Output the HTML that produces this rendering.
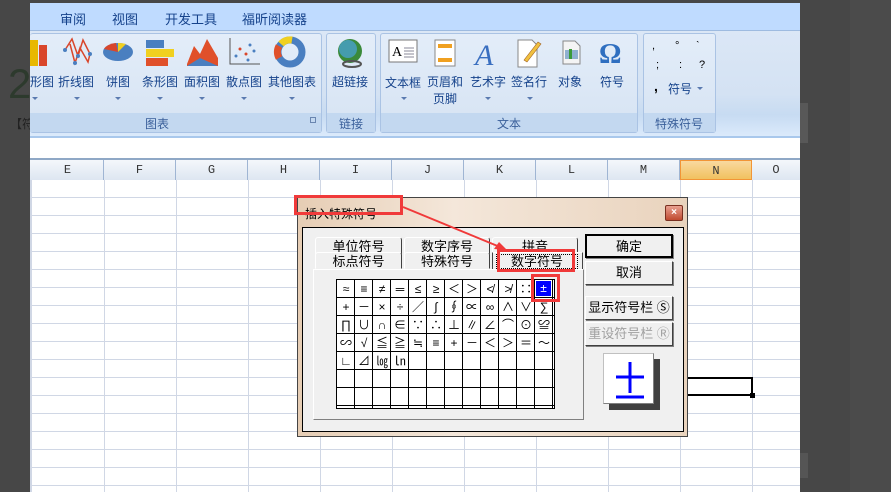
<!DOCTYPE html>
<html><head><meta charset="utf-8"><style>
*{margin:0;padding:0;box-sizing:border-box}
body{width:891px;height:492px;overflow:hidden;background:#474747;position:relative;font-family:"Liberation Sans","Noto Sans CJK SC",sans-serif}
.a{position:absolute}
.t{position:absolute;font-size:13px;color:#15428b;white-space:nowrap}
.lbl{position:absolute;font-size:12px;color:#15428b;white-space:nowrap}
.dd{position:absolute;width:0;height:0;border-left:3px solid transparent;border-right:3px solid transparent;border-top:3px solid #5a7ab0}
.col{position:absolute;top:160px;height:20px;font-family:"Liberation Mono",monospace;font-size:12px;color:#333;text-align:center;line-height:20px;border-right:1px solid #9fb5d3;background:linear-gradient(#f4f7fb,#dde6f1)}
.btn{position:absolute;left:585px;width:88px;height:24px;background:#f0f0f0;border:1px solid;border-color:#fff #404040 #404040 #fff;box-shadow:1px 1px 0 #808080;font-size:13px;text-align:center;line-height:22px;color:#000}
.cell{position:absolute;width:18px;height:18px;font-size:12px;line-height:18px;text-align:center;color:#000}
.tab{position:absolute;height:17px;font-size:13px;line-height:17px;text-align:center;background:#f0f0f0;border:1px solid;border-color:#fff #404040 transparent #fff;border-radius:3px 3px 0 0}
.p{position:absolute;font-size:11px;color:#000}
</style></head><body>
<div class="a" style="left:8px;top:60px;font-size:42px;color:#2d3a2d">2</div>
<div class="a" style="left:10px;top:115px;font-size:12px;color:#222">【符</div>
<div class="a" style="left:850px;top:0;width:41px;height:492px;background:#4b4b4b"></div>
<div class="a" style="left:800px;top:103px;width:8px;height:40px;background:#585858"></div>
<div class="a" style="left:800px;top:453px;width:8px;height:25px;background:#555"></div>

<div class="a" style="left:30px;top:3px;width:770px;height:489px;background:#fff;overflow:hidden">
 <div class="a" style="left:0;top:0;width:770px;height:27px;background:#bfdbff"></div>
 <div class="a" style="left:0;top:27px;width:770px;height:108px;background:linear-gradient(#dbe7f6,#d4e2f3 60%,#c7dbf2 80%,#dbeafb);border-top:1px solid #9ebbe0;border-bottom:2px solid #a9c8ec"></div>
 <div class="a" style="left:0;top:155px;width:770px;height:2px;background:#8fa8c6"></div>
</div>
<div class="t" style="left:60px;top:9px">审阅</div>
<div class="t" style="left:112px;top:9px">视图</div>
<div class="t" style="left:165px;top:9px">开发工具</div>
<div class="t" style="left:242px;top:9px">福昕阅读器</div>

<div class="a" style="left:30px;top:33px;width:292px;height:100px;border:1px solid #aac3e4;border-left:none;border-radius:3px;background:linear-gradient(#e3edf9,#d6e3f3)"></div>
<div class="a" style="left:30px;top:113px;width:291px;height:19px;background:#c3d8f0"></div>
<div class="a" style="left:326px;top:33px;width:50px;height:100px;border:1px solid #aac3e4;border-radius:3px;background:linear-gradient(#e3edf9,#d6e3f3)"></div>
<div class="a" style="left:327px;top:113px;width:48px;height:19px;background:#c3d8f0"></div>
<div class="a" style="left:380px;top:33px;width:258px;height:100px;border:1px solid #aac3e4;border-radius:3px;background:linear-gradient(#e3edf9,#d6e3f3)"></div>
<div class="a" style="left:381px;top:113px;width:256px;height:19px;background:#c3d8f0"></div>
<div class="a" style="left:643px;top:33px;width:73px;height:100px;border:1px solid #aac3e4;border-radius:3px;background:linear-gradient(#e3edf9,#d6e3f3)"></div>
<div class="a" style="left:644px;top:113px;width:71px;height:19px;background:#c3d8f0"></div>
<div class="lbl" style="left:145px;top:115px;color:#3a5f9a">图表</div>
<div class="a" style="left:310px;top:117px;width:6px;height:6px;border:1px solid #6a86b0"></div>
<div class="lbl" style="left:339px;top:115px;color:#3a5f9a">链接</div>
<div class="lbl" style="left:497px;top:115px;color:#3a5f9a">文本</div>
<div class="lbl" style="left:655px;top:115px;color:#3a5f9a">特殊符号</div>

<svg class="a" style="left:30px;top:36px" width="610" height="36">
 <rect x="0" y="4" width="8" height="26" fill="#e8b800"/><rect x="9" y="9" width="8" height="21" fill="#d9462b"/>
 <polyline points="35,14 42,3 48,20 53,4 60,18 58,26 50,12 45,27 40,8" fill="none" stroke="#d9462b" stroke-width="1.5"/>
 <circle cx="35" cy="14" r="2" fill="#4a7fc0"/><circle cx="48" cy="20" r="2" fill="#4a7fc0"/><circle cx="60" cy="18" r="2" fill="#4a7fc0"/><circle cx="45" cy="27" r="2" fill="#4a7fc0"/>
 <ellipse cx="88" cy="16" rx="15" ry="9" fill="#4a7fc0"/><path d="M88 16 L74 13 A15 9 0 0 1 86 7 Z" fill="#d9462b"/><path d="M88 16 L88 7 A15 9 0 0 1 96 8Z" fill="#f0d020"/>
 <rect x="116" y="4" width="18" height="8" fill="#4a7fc0"/><rect x="116" y="13" width="28" height="8" fill="#f0d020"/><rect x="116" y="22" width="22" height="8" fill="#e0502a"/>
 <path d="M157 28 L164 10 L170 18 L177 3 L188 22 L188 30 L157 30Z" fill="#e0502a"/><path d="M157 30 L170 22 L188 30Z" fill="#4a7fc0"/>
 <path d="M200 2 V28 H230" fill="none" stroke="#555" stroke-width="1"/>
 <circle cx="206" cy="20" r="1.5" fill="#4a7fc0"/><circle cx="210" cy="13" r="1.5" fill="#d9462b"/><circle cx="216" cy="18" r="1.5" fill="#d9462b"/><circle cx="220" cy="9" r="1.5" fill="#4a7fc0"/><circle cx="224" cy="15" r="1.5" fill="#4a7fc0"/><circle cx="218" cy="24" r="1.5" fill="#4a7fc0"/>
 <circle cx="260" cy="16" r="12" fill="none" stroke="#4a7fc0" stroke-width="7"/><path d="M251 8 A12 12 0 0 1 262 4" stroke="#f0d020" stroke-width="7" fill="none"/><path d="M249 22 A12 12 0 0 1 249 10" stroke="#e0502a" stroke-width="7" fill="none"/>
 <circle cx="320" cy="15" r="12" fill="#3a8a3a"/><circle cx="318" cy="13" r="9" fill="#4aa4e0" opacity=".7"/><ellipse cx="322" cy="28" rx="9" ry="3" fill="none" stroke="#555" stroke-width="2"/>
 <rect x="359" y="4" width="28" height="22" fill="#fff" stroke="#777"/><text x="362" y="20" font-size="14" font-family="Liberation Serif">A</text><path d="M374 12h10M374 15h10M374 18h10M374 21h10" stroke="#889" stroke-width="1"/>
 <rect x="405" y="4" width="20" height="26" fill="#fff" stroke="#888"/><rect x="408" y="8" width="14" height="4" fill="#f0a020"/><rect x="408" y="22" width="14" height="4" fill="#f0a020"/>
 <text x="445" y="29" font-size="30" font-style="italic" fill="#3a6fc0" font-family="Liberation Serif">A</text>
 <path d="M488 4h14l5 5v22h-19z" fill="#fff" stroke="#888"/><path d="M494 24 L508 6 l3 2 L497 26z" fill="#f0c040" stroke="#a06020" stroke-width=".6"/>
 <path d="M533 5h12l5 5v18h-17z" fill="#f4f4f4" stroke="#888"/><rect x="535" y="14" width="13" height="9" fill="#8fb0d0"/><rect x="539" y="13" width="3" height="10" fill="#3a9a3a"/>
 <text x="569" y="27" font-size="28" fill="#2f6fc0" font-weight="bold" font-family="Liberation Serif">Ω</text>
</svg>
<div class="lbl" style="left:30px;top:73px">形图</div><div class="dd" style="left:32px;top:97px"></div>
<div class="lbl" style="left:58px;top:73px">折线图</div><div class="dd" style="left:74px;top:97px"></div>
<div class="lbl" style="left:106px;top:73px">饼图</div><div class="dd" style="left:115px;top:97px"></div>
<div class="lbl" style="left:142px;top:73px">条形图</div><div class="dd" style="left:157px;top:97px"></div>
<div class="lbl" style="left:184px;top:73px">面积图</div><div class="dd" style="left:199px;top:97px"></div>
<div class="lbl" style="left:226px;top:73px">散点图</div><div class="dd" style="left:241px;top:97px"></div>
<div class="lbl" style="left:268px;top:73px">其他图表</div><div class="dd" style="left:289px;top:97px"></div>
<div class="lbl" style="left:332px;top:73px">超链接</div>
<div class="lbl" style="left:385px;top:74px">文本框</div><div class="dd" style="left:401px;top:97px"></div>
<div class="lbl" style="left:427px;top:73px">页眉和</div><div class="lbl" style="left:433px;top:90px">页脚</div>
<div class="lbl" style="left:470px;top:73px">艺术字</div><div class="dd" style="left:485px;top:97px"></div>
<div class="lbl" style="left:511px;top:73px">签名行</div><div class="dd" style="left:527px;top:97px"></div>
<div class="lbl" style="left:558px;top:73px">对象</div>
<div class="lbl" style="left:600px;top:73px">符号</div>
<div class="p" style="left:652px;top:40px">,</div><div class="p" style="left:675px;top:40px">°</div><div class="p" style="left:696px;top:40px">ˋ</div>
<div class="p" style="left:656px;top:59px">;</div><div class="p" style="left:679px;top:59px">:</div><div class="p" style="left:699px;top:59px">?</div>
<div class="a" style="left:654px;top:78px;font-size:14px;font-weight:bold;color:#000">,</div>
<div class="lbl" style="left:668px;top:80px">符号</div><div class="dd" style="left:697px;top:87px"></div>

<div class="a" style="left:30px;top:160px;width:770px;height:20px;background:linear-gradient(#f4f7fb,#dde6f1)"></div>
<div class="col" style="left:32px;width:72px">E</div>
<div class="col" style="left:104px;width:72px">F</div>
<div class="col" style="left:176px;width:72px">G</div>
<div class="col" style="left:248px;width:72px">H</div>
<div class="col" style="left:320px;width:72px">I</div>
<div class="col" style="left:392px;width:72px">J</div>
<div class="col" style="left:464px;width:72px">K</div>
<div class="col" style="left:536px;width:72px">L</div>
<div class="col" style="left:608px;width:72px">M</div>
<div class="col" style="left:680px;width:72px;background:linear-gradient(#f9d99f,#f1c15f);border:1px solid #f29536">N</div>
<div class="col" style="left:752px;width:48px;border:none">O</div>
<div class="a" style="left:30px;top:180px;width:770px;height:312px;background-image:repeating-linear-gradient(to right,transparent 0 71px,#d0d7e5 71px 72px),repeating-linear-gradient(to bottom,transparent 0 17px,#d0d7e5 17px 18px);background-position:3px 0,0 0"></div>
<div class="a" style="left:30px;top:180px;width:2px;height:312px;background:#d0d7e5"></div>
<div class="a" style="left:686px;top:377px;width:67px;height:19px;border:2px solid #000;border-left:none"></div>
<div class="a" style="left:750px;top:393px;width:5px;height:5px;background:#000"></div>

<div class="a" style="left:297px;top:197px;width:391px;height:240px;background:linear-gradient(90deg,#e6cdb4,#f4e7da 40%,#e9d3bd);border:1px solid #444"></div>
<div class="a" style="left:305px;top:205px;font-size:12px;color:#000">插入特殊符号</div>
<div class="a" style="left:665px;top:205px;width:18px;height:16px;background:linear-gradient(#e8a090,#c04a30);border:1px solid #7a3020;border-radius:2px;color:#fff;font-size:10px;text-align:center;line-height:14px;font-weight:bold">×</div>
<div class="a" style="left:302px;top:227px;width:382px;height:205px;background:#f0f0f0;border:1px solid #000"></div>
<div class="tab" style="left:315px;top:237px;width:87px">单位符号</div>
<div class="tab" style="left:404px;top:237px;width:86px">数字序号</div>
<div class="tab" style="left:492px;top:237px;width:86px">拼音</div>
<div class="tab" style="left:315px;top:252px;width:87px">标点符号</div>
<div class="tab" style="left:404px;top:252px;width:86px">特殊符号</div>
<div class="a" style="left:492px;top:252px;width:91px;height:18px;background:#f0f0f0;border:1px solid #444;border-bottom:none;border-top-color:#fff"></div>
<div class="a" style="left:496px;top:254px;width:82px;height:15px;border:1px dotted #000;font-size:13px;line-height:13px;text-align:center">数字符号</div>
<div class="a" style="left:313px;top:269px;width:271px;height:151px;border:1px solid;border-color:#fff #808080 #808080 #fff;background:#f0f0f0"></div>
<div class="a" style="left:336px;top:279px;width:219px;height:130px;background:#fff;border:1px solid #000;background-image:repeating-linear-gradient(to right,transparent 0 17px,#000 17px 18px),repeating-linear-gradient(to bottom,transparent 0 17px,#000 17px 18px)"></div>
<div id="g"></div>
<div class="a" style="left:536px;top:281px;width:15px;height:15px;background:#0000ff;color:#fff;font-size:12px;text-align:center;line-height:15px">±</div>

<div class="btn" style="top:234px;border:2px solid #000">确定</div>
<div class="btn" style="top:261px">取消</div>
<div class="btn" style="top:296px">显示符号栏 Ⓢ</div>
<div class="btn" style="top:322px;color:#a0a0a0">重设符号栏 Ⓡ</div>
<div class="a" style="left:609px;top:359px;width:51px;height:51px;background:#404040"></div>
<div class="a" style="left:603px;top:353px;width:51px;height:51px;background:#fff;border:1px solid;border-color:#c0c0c0 #808080 #808080 #c0c0c0"></div>
<svg class="a" style="left:603px;top:353px" width="51" height="51"><path d="M27 9V40M13 24H41M13 44H41" stroke="#0000ff" stroke-width="3"/></svg>

<div class="a" style="left:294px;top:195px;width:109px;height:20px;border:3px solid #f03a3a"></div>
<div class="a" style="left:497px;top:249px;width:78px;height:23px;border:3px solid #f03a3a"></div>
<div class="a" style="left:531px;top:274px;width:29px;height:28px;border:3px solid #f03a3a"></div>
<svg class="a" style="left:0;top:0" width="891" height="492"><line x1="403" y1="207" x2="500" y2="247" stroke="#f03a3a" stroke-width="2"/><path d="M507 250 L494 249 L499 242Z" fill="#f03a3a"/></svg>

<script>
var s=["≈","≡","≠","═","≤","≥","＜","＞","≮","≯","∷","",
"+","－","×","÷","／","∫","∮","∝","∞","∧","∨","∑",
"∏","∪","∩","∈","∵","∴","⊥","∥","∠","⌒","⊙","≌",
"∽","√","≦","≧","≒","≡","+","－","＜","＞","＝","～",
"∟","⊿","㏒","㏑"];
var h="";for(var i=0;i<s.length;i++){var c=i%12,r=Math.floor(i/12);h+='<div class="cell" style="left:'+(337+c*18)+'px;top:'+(280+r*18)+'px">'+s[i]+'</div>';}
document.getElementById("g").outerHTML=h;
</script>
</body></html>
